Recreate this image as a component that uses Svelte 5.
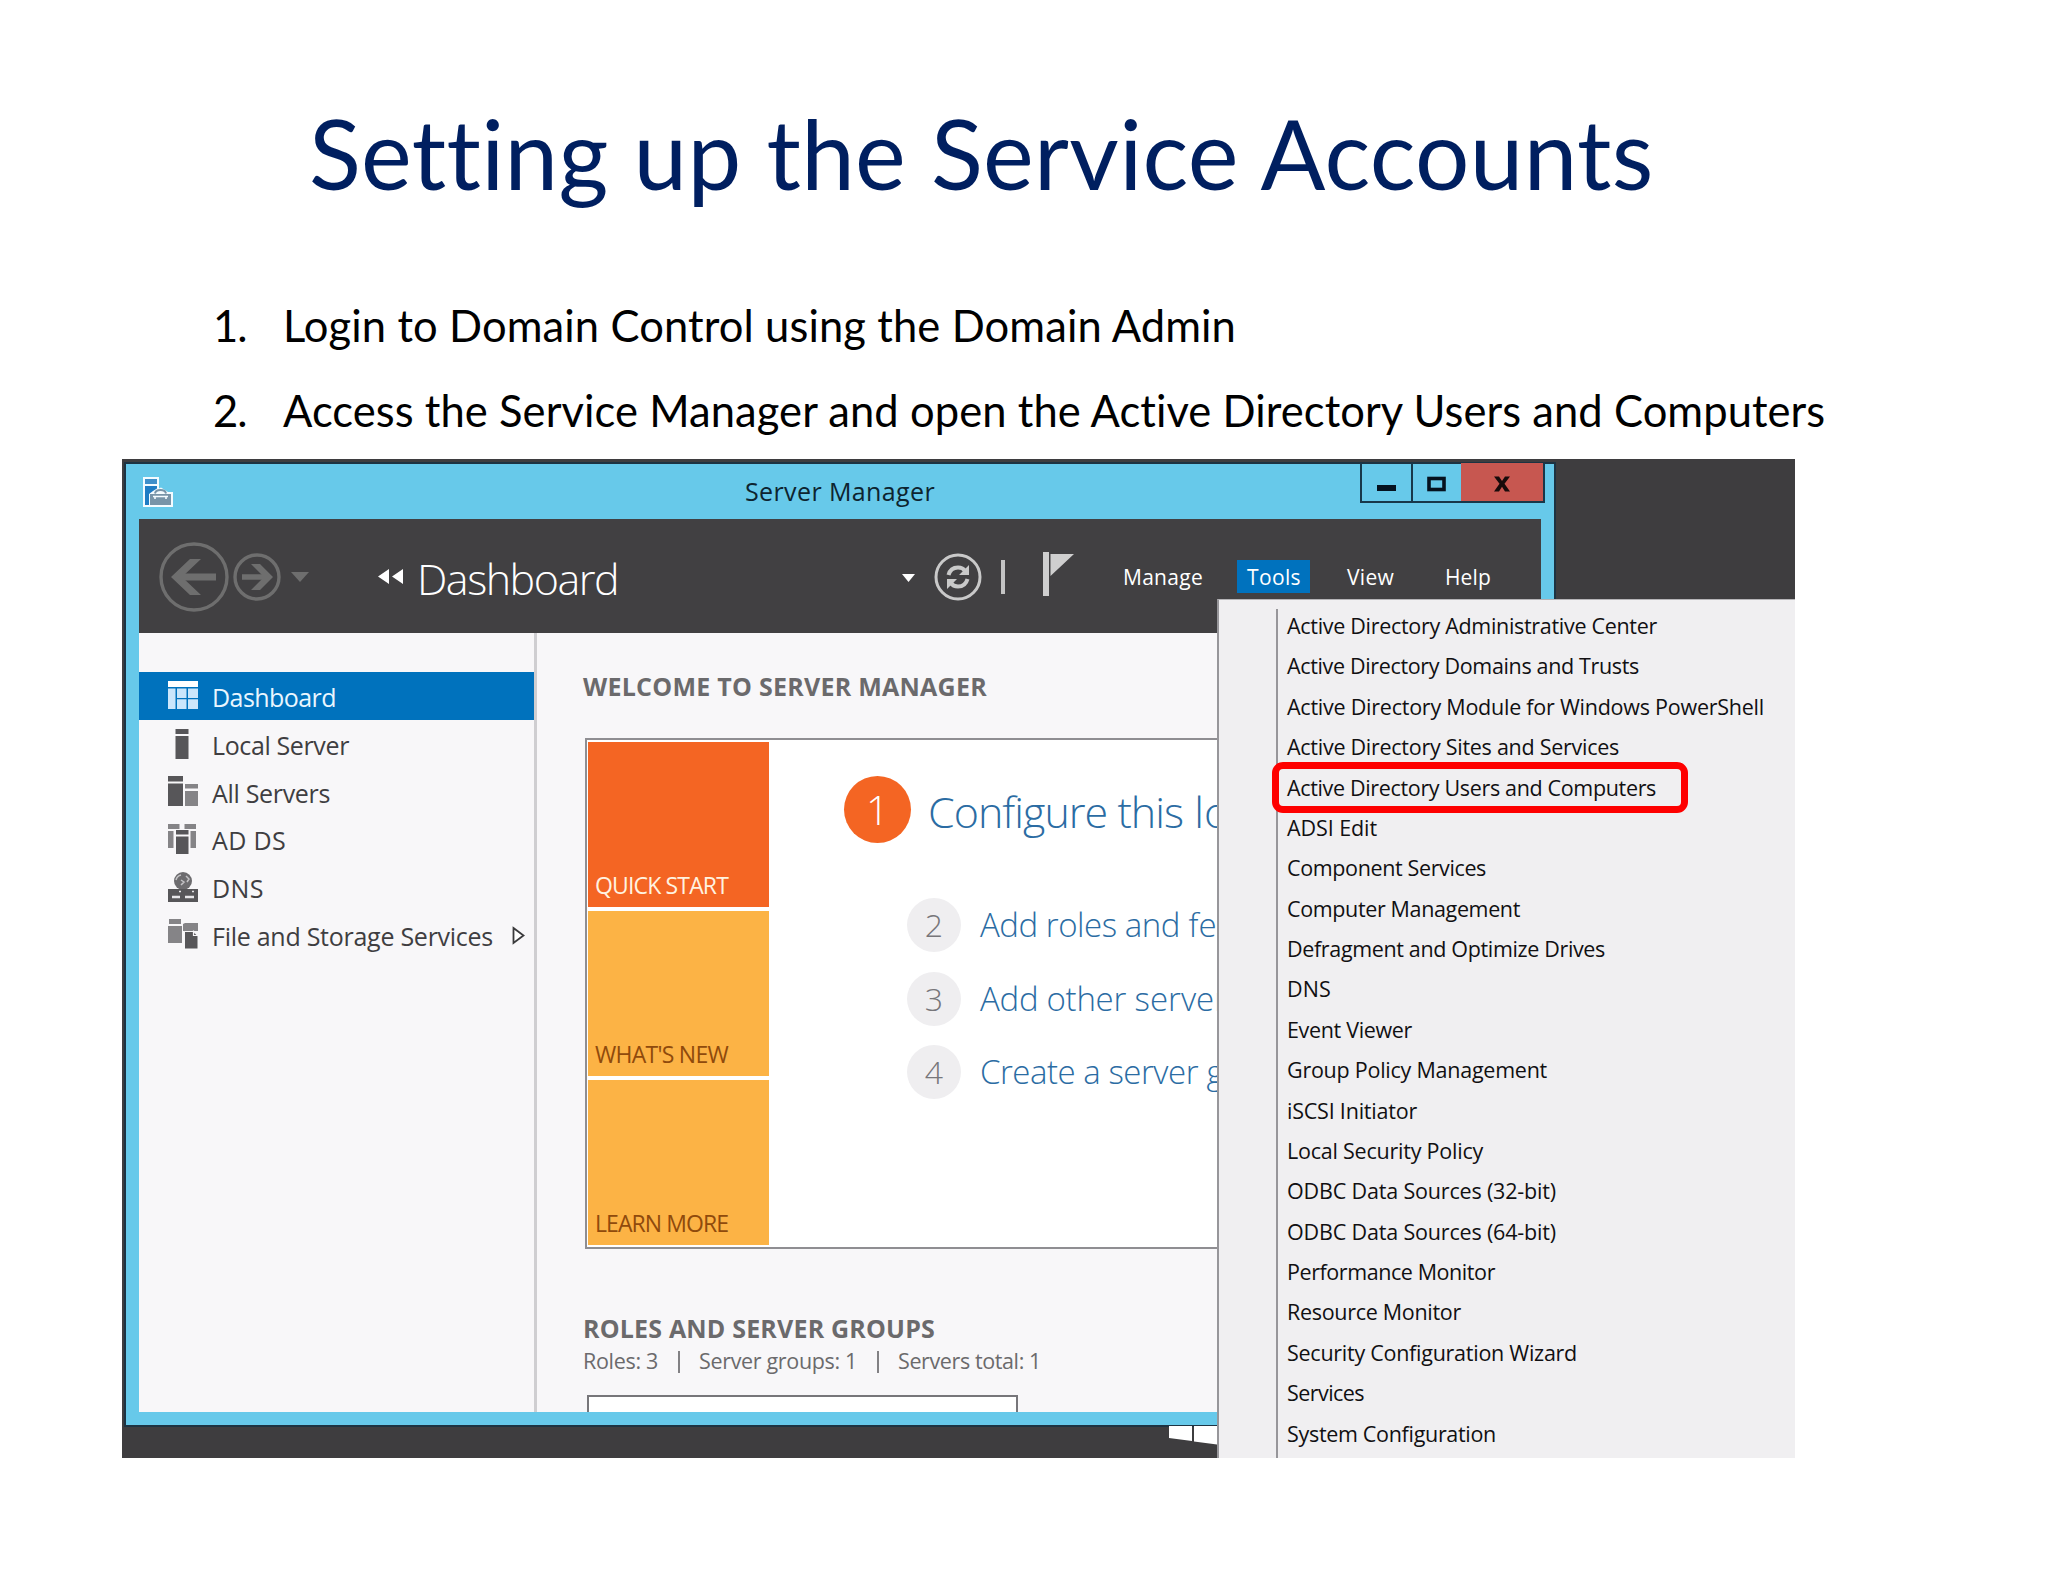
<script>
  const steps = [
    { text: "Login to Domain Control using the Domain Admin", width: 953 },
    { text: "Access the Service Manager and open the Active Directory Users and Computers", width: 1543 },
  ];

  const navItems = [
    { label: "Dashboard", icon: "dashboard", width: 124, active: true },
    { label: "Local Server", icon: "local", width: 137 },
    { label: "All Servers", icon: "all", width: 118 },
    { label: "AD DS", icon: "adds", width: 74 },
    { label: "DNS", icon: "dns", width: 52 },
    { label: "File and Storage Services", icon: "file", width: 281, arrow: true },
  ];

  const barItems = [
    { label: "Manage", width: 80 },
    { label: "Tools", width: 54, open: true },
    { label: "View", width: 47 },
    { label: "Help", width: 46 },
  ];

  const tiles = [
    { label: "QUICK START", width: 133, current: true },
    { label: "WHAT'S NEW", width: 133 },
    { label: "LEARN MORE", width: 133 },
  ];

  const tasks = [
    { number: 1, text: "Configure this", rest: "lo", width: 255, main: true },
    { number: 2, text: "Add roles and", rest: "fe", width: 200 },
    { number: 3, text: "Add other", rest: "server", width: 146 },
    { number: 4, text: "Create a server", rest: "g", width: 218 },
  ];

  const counts = [
    { text: "Roles: 3", width: 75 },
    { text: "Server groups: 1", width: 158 },
    { text: "Servers total: 1", width: 143 },
  ];

  const tools = [
    { label: "Active Directory Administrative Center", width: 370 },
    { label: "Active Directory Domains and Trusts", width: 352 },
    { label: "Active Directory Module for Windows PowerShell", width: 477 },
    { label: "Active Directory Sites and Services", width: 332 },
    { label: "Active Directory Users and Computers", width: 369 },
    { label: "ADSI Edit", width: 90 },
    { label: "Component Services", width: 199 },
    { label: "Computer Management", width: 233 },
    { label: "Defragment and Optimize Drives", width: 318 },
    { label: "DNS", width: 44 },
    { label: "Event Viewer", width: 125 },
    { label: "Group Policy Management", width: 260 },
    { label: "iSCSI Initiator", width: 130 },
    { label: "Local Security Policy", width: 196 },
    { label: "ODBC Data Sources (32-bit)", width: 269 },
    { label: "ODBC Data Sources (64-bit)", width: 269 },
    { label: "Performance Monitor", width: 208 },
    { label: "Resource Monitor", width: 174 },
    { label: "Security Configuration Wizard", width: 290 },
    { label: "Services", width: 77 },
    { label: "System Configuration", width: 209 },
  ];

  // spread the letters so the text takes the given width
  function fit(node, width) {
    const count = node.textContent.trim().length;
    const natural = node.getBoundingClientRect().width;
    node.style.letterSpacing = `${(width - natural) / count}px`;
  }
</script>

<main class="slide">
  <h1><span use:fit={1342}>Setting up the Service Accounts</span></h1>

  <ol class="steps">
    {#each steps as step, i}
      <li>
        <span class="step-number">{i + 1}.</span>
        <span use:fit={step.width}>{step.text}</span>
      </li>
    {/each}
  </ol>

  <section class="desktop">
    <svg class="start-logo" width="48" height="20" viewBox="0 0 48 20">
      <path d="M0 0H23V15L0 12Z M25 0H48V18.500L25 15.500Z" fill="#fff" />
    </svg>

    <div class="window">
      <header class="titlebar">
        <svg class="app-icon" width="30" height="30" viewBox="0 0 30 30">
          <path d="M0 0H16V11.500L18 10.500L25 15H30V30H0Z" fill="#f4fbff" />
          <path d="M2 2H14V7H2Z" fill="#3f8fca" />
          <path d="M2 9H14V11.500L10 14L6 17V28H2Z" fill="#1f7cc4" />
          <path d="M7 17H28V28H7Z" fill="#7894a8" />
          <path d="M12 16.500Q12.500 13 17.500 13Q22.500 13 23 16.500" fill="none" stroke="#7894a8" stroke-width="2" />
          <path d="M10 19.500H25M12 20V22M23 20V22" stroke="#f4fbff" stroke-width="1.600" />
        </svg>
        <span class="window-title"><span use:fit={190}>Server Manager</span></span>
        <div class="controls">
          <div class="control minimize">
            <svg width="20" height="16"><rect x="0" y="9" width="19" height="6" fill="#05121f" /></svg>
          </div>
          <div class="control maximize">
            <svg width="20" height="16"><rect x="2" y="2.500" width="15" height="11" fill="none" stroke="#05121f" stroke-width="3.600" /></svg>
          </div>
          <div class="control close">
            <svg width="18" height="16"><path d="M1 .500H6L9 5L12 .500H17L11.500 7.800L17 15.500H12L9 10.800L6 15.500H1L6.500 7.800Z" fill="#170b0b" /></svg>
          </div>
        </div>
      </header>

      <div class="toolbar">
        <svg class="back" width="70" height="70" viewBox="0 0 70 70" fill="none" stroke="#6e6e6e">
          <circle cx="35" cy="35" r="33" stroke-width="3.400" />
          <path d="M57 35H18" stroke-width="7" />
          <path d="M42 17L31 17L12 35L31 53H42L23 35Z" fill="#6e6e6e" stroke="none" />
        </svg>
        <svg class="forward" width="48" height="48" viewBox="0 0 48 48" fill="none" stroke="#6e6e6e">
          <circle cx="24" cy="24" r="22" stroke-width="3.400" />
          <path d="M9 24H37" stroke-width="5.500" />
          <path d="M18 11H27L40 24L27 37H18L31 24Z" fill="#6e6e6e" stroke="none" />
        </svg>
        <svg class="history" width="18" height="10"><path d="M0 0H18L9 10Z" fill="#6e6e6e" /></svg>
        <svg class="crumbs" width="26" height="15"><path d="M11 0V15L0 7.500ZM25 0V15L14 7.500Z" fill="#fff" /></svg>
        <span class="page-name"><span use:fit={201}>Dashboard</span></span>
        <svg class="drop" width="13" height="8"><path d="M0 0H13L6.500 8Z" fill="#fff" /></svg>
        <svg class="refresh" width="48" height="48" viewBox="0 0 48 48" fill="none" stroke="#c9c9c9">
          <circle cx="24" cy="24" r="22" stroke-width="3" />
          <path d="M14.500 22Q16.500 14.500 24 14.500Q29 14.500 31 18" stroke-width="4" />
          <path d="M33.500 26Q31.500 33.500 24 33.500Q19 33.500 17 30" stroke-width="4" />
          <path d="M35 12V22H25Z M13 36V26H23Z" fill="#c9c9c9" stroke="none" />
        </svg>
        <div class="separator"></div>
        <svg class="flag" width="32" height="44"><path d="M0 0H6V44H0Z M7.500 2H31L7.500 24Z" fill="#cfcfcf" /></svg>
        <nav class="bar">
          {#each barItems as item}
            <div class="bar-item" class:open={item.open}><span use:fit={item.width}>{item.label}</span></div>
          {/each}
        </nav>
      </div>

      <div class="content">
        <aside class="sidebar">
          {#each navItems as item}
            <div class="nav-item" class:active={item.active}>
              <svg width="30" height="30" viewBox="0 0 30 30" fill="#575659">
                {#if item.icon === "dashboard"}
                  <path d="M0 0H30V6H0Z" fill="#fff" />
                  <path d="M0 7.500H7.500V28H0Z M9 7.500H18.500V17H9Z M20 7.500H30V17H20Z M9 18.300H18.500V28H9Z M20 18.300H30V28H20Z" fill="#cbe6fb" />
                {:else if item.icon === "local"}
                  <path d="M7.500 0H20.500V5H7.500Z M7.500 7H20.500V30H7.500Z" />
                {:else if item.icon === "all"}
                  <path d="M0 0H15V5.500H0Z M0 7.500H15V30H0Z" />
                  <path d="M17 8H30V12.500H17Z M17 15H30V30H17Z" fill="#858487" />
                {:else if item.icon === "adds"}
                  <path d="M0 0H11.500V5H0Z M0 7H5.500V24H0Z M16.500 0H28V5H16.500Z M22.500 7H28V24H22.500Z" fill="#858487" />
                  <path d="M8 6H20.500V10.500H8Z M8 12.500H20.500V30H8Z" />
                {:else if item.icon === "dns"}
                  <circle cx="15" cy="9" r="9" fill="#6d6c6f" />
                  <path d="M8 8Q9 4 13 3M13 8L16 10L13 13M18 4L21 7L19 10" fill="none" stroke="#c4c3c6" stroke-width="1.500" />
                  <path d="M0 17H30V30H0Z" />
                  <path d="M4 25H12M17 25H26" stroke="#e8e7ea" stroke-width="2.500" />
                  <path d="M11 19.500H13M24 19.500H26" stroke="#e8e7ea" stroke-width="1.500" />
                {:else}
                  <path d="M1 0H13V5H1Z M0 7H14V24H0Z" fill="#858487" />
                  <path d="M15 5L17 4H30V12H15Z" fill="#858487" />
                  <path d="M16.500 12.500H25L30 17V30H16.500Z" stroke="#f7f6f8" stroke-width="1" />
                  <path d="M25.500 11.500V16.500H31" fill="none" stroke="#f7f6f8" stroke-width="1.200" />
                {/if}
              </svg>
              <span class="nav-label"><span use:fit={item.width}>{item.label}</span></span>
              {#if item.arrow}
                <svg class="expand" width="14" height="20"><path d="M1.500 2L11.500 9.500L1.500 17Z" fill="#fff" stroke="#3a3a3c" stroke-width="1.800" /></svg>
              {/if}
            </div>
          {/each}
        </aside>

        <div class="main">
          <h2><span use:fit={404}>WELCOME TO SERVER MANAGER</span></h2>

          <div class="welcome">
            <div class="tiles">
              {#each tiles as tile}
                <div class="tile" class:current={tile.current}><span use:fit={tile.width}>{tile.label}</span></div>
              {/each}
            </div>
            <div class="tasks">
              {#each tasks as task}
                <div class="task" class:first={task.main}>
                  <span class="badge">{task.number}</span>
                  <span class="task-text"><span use:fit={task.width}>{task.text}</span>&nbsp;{task.rest}</span>
                </div>
              {/each}
            </div>
          </div>

          <h2 class="roles"><span use:fit={352}>ROLES AND SERVER GROUPS</span></h2>
          <div class="counts">
            {#each counts as count, i}
              {#if i > 0}<i class="bar-mark"></i>{/if}
              <span use:fit={count.width}>{count.text}</span>
            {/each}
          </div>
          <div class="role-card"></div>
        </div>
      </div>
    </div>

    <div class="menu">
      <ul>
        {#each tools as tool}
          <li><span use:fit={tool.width}>{tool.label}</span></li>
        {/each}
      </ul>
    </div>
    <div class="highlight"></div>
  </section>
</main>

<style>
  :global(body) {
    background: #fff;
  }

  * {
    box-sizing: border-box;
  }

  svg {
    display: block;
    flex-shrink: 0;
  }

  .slide {
    width: 2048px;
    height: 1582px;
    padding-top: 99px;
    overflow: hidden;
    background: #fff;
    font-family: "Open Sans", "Noto Sans", sans-serif;
    white-space: nowrap;
  }

  h1 {
    margin: 0 0 0 309px;
    height: 110px;
    font: 400 96px/108px Lato, sans-serif;
    color: #001f60;
  }

  .steps {
    list-style: none;
    margin: 74px 0 6px 213px;
    padding: 0;
    font: 400 43.5px/84px Lato, sans-serif;
    color: #000;
  }

  .steps li {
    display: flex;
    height: 85px;
  }

  .step-number {
    width: 70px;
    letter-spacing: -1px;
  }

  .desktop {
    position: relative;
    width: 1673px;
    height: 999px;
    margin-left: 122px;
    padding: 5px 0 0 4px;
    overflow: hidden;
    background: #3e3d3f;
  }

  .start-logo {
    position: absolute;
    left: 1047px;
    top: 967px;
  }

  .window {
    width: 1428px;
    height: 961px;
    padding: 0 13px 13px;
    background: #67c9ea;
    box-shadow: 0 0 0 2px #1d3342;
  }

  .titlebar {
    display: grid;
    grid-template-columns: 1fr auto 1fr;
    align-items: center;
    height: 55px;
    margin-right: -4px;
    margin-left: 4px;
  }

  .window-title {
    margin-left: -8px;
    font-size: 25px;
    line-height: 55px;
    color: #0d2430;
  }

  .controls {
    display: flex;
    align-self: start;
    justify-self: end;
    height: 40px;
    margin-top: -1px;
    border: 2px solid #17384a;
    border-top: 0;
  }

  .control {
    display: flex;
    justify-content: center;
    padding-top: 13px;
  }

  .minimize {
    width: 51px;
    border-right: 2px solid #17384a;
  }

  .maximize {
    width: 48px;
  }

  .close {
    width: 82px;
    background: #c75750;
  }

  .toolbar {
    display: flex;
    align-items: center;
    height: 114px;
    padding: 1px 0 0 20px;
    background: #414042;
    color: #fff;
  }

  .forward {
    margin-left: 4px;
  }

  .history {
    margin-left: 10px;
  }

  .crumbs {
    margin-left: 69px;
  }

  .page-name {
    width: 485px;
    margin: 3px 0 0 13px;
    font-size: 43px;
    font-weight: 300;
  }

  .drop {
    margin-top: 3px;
  }

  .refresh {
    margin-left: 19px;
  }

  .separator {
    width: 4px;
    height: 34px;
    margin-left: 19px;
    background: #c4c4c4;
  }

  .flag {
    margin: -6px 0 0 38px;
  }

  .bar {
    display: flex;
    margin-left: 37px;
    font-size: 21px;
    font-weight: 500;
    line-height: 35px;
  }

  .bar-item {
    height: 33px;
    padding: 0 11px;
    margin-right: 13px;
  }

  .bar-item.open {
    width: 73px;
    margin: 0 26px 0 10px;
    padding: 0 10px;
    background: #0072be;
  }

  .bar-item:nth-child(3) {
    margin-right: 29px;
  }

  .content {
    display: flex;
    height: 779px;
    overflow: hidden;
    background: #f8f7f9;
  }

  .sidebar {
    width: 398px;
    flex-shrink: 0;
    padding-top: 39px;
    border-right: 3px solid #cfced1;
  }

  .nav-item {
    display: flex;
    align-items: center;
    height: 47.7px;
    padding: 0 0 0 29px;
    font-size: 25px;
    color: #3f3e41;
  }

  .nav-item.active {
    background: #0072bd;
    color: #e9f6ff;
  }

  .nav-label {
    margin: 3px 0 0 14px;
  }

  .expand {
    margin: 4px 0 0 19px;
  }

  .main {
    flex: 1;
    padding: 33px 0 0 46px;
    overflow: hidden;
  }

  h2 {
    margin: 0;
    font-size: 25px;
    font-weight: 700;
    line-height: 40px;
    height: 40px;
    color: #6b6a6c;
  }

  .welcome {
    display: flex;
    width: 960px;
    height: 511px;
    margin: 32px 0 0 2px;
    padding: 2px 2px 2px 1px;
    border: 2px solid #8f8e92;
    background: #fff;
  }

  .tiles {
    display: flex;
    flex-direction: column;
    gap: 4px;
    width: 181px;
  }

  .tile {
    display: flex;
    flex: 1;
    align-items: flex-end;
    padding: 0 0 6px 7px;
    background: #fcb345;
    color: #8f4a0c;
    font-size: 23px;
    line-height: 32px;
  }

  .tile.current {
    background: #f46523;
    color: #fff3e0;
  }

  .tasks {
    padding: 34px 0 0 75px;
  }

  .task {
    display: flex;
    align-items: center;
    height: 54px;
    margin: 0 0 19.5px 63px;
    font-size: 33px;
    font-weight: 300;
    line-height: 54px;
    color: #2b6ca3;
  }

  .badge {
    display: flex;
    align-items: center;
    justify-content: center;
    width: 54px;
    height: 54px;
    margin-right: 19px;
    border-radius: 50%;
    background: #efeef0;
    color: #77767a;
    font-size: 32px;
  }

  .task.first {
    height: 67px;
    margin: 0 0 55px;
    font-size: 43px;
    line-height: 74px;
  }

  .first .badge {
    width: 67px;
    height: 67px;
    margin-right: 17px;
    background: #f46523;
    color: #fff;
    font-size: 40px;
  }

  .first .task-text {
    margin-top: 4px;
  }

  .roles {
    margin-top: 59px;
  }

  .counts {
    display: flex;
    align-items: center;
    height: 25px;
    padding-top: 1px;
    font-size: 21.5px;
    line-height: 24px;
    color: #6b6a6c;
  }

  .bar-mark {
    width: 2px;
    height: 22px;
    margin: 2px 19px 0 20px;
    background: #828184;
  }

  .role-card {
    width: 431px;
    height: 60px;
    margin: 22px 0 0 4px;
    border: 2px solid #77767a;
    background: #fff;
  }

  .menu {
    position: absolute;
    left: 1095px;
    top: 140px;
    width: 578px;
    height: 859px;
    padding: 9px 0 0 57px;
    border-left: 2px solid #97969a;
    border-top: 1px solid #b5b4b7;
    background: #f0eff1;
  }

  .menu ul {
    list-style: none;
    height: 860px;
    margin: 0;
    padding: 0 0 0 9px;
    border-left: 2px solid #97969a;
  }

  .menu li {
    height: 40.39px;
    padding-top: 1px;
    font-size: 21.5px;
    line-height: 32px;
    color: #111012;
  }

  .highlight {
    position: absolute;
    left: 1150px;
    top: 303px;
    width: 416px;
    height: 51px;
    border: 7.500px solid #fe0000;
    border-radius: 11px;
  }
</style>
